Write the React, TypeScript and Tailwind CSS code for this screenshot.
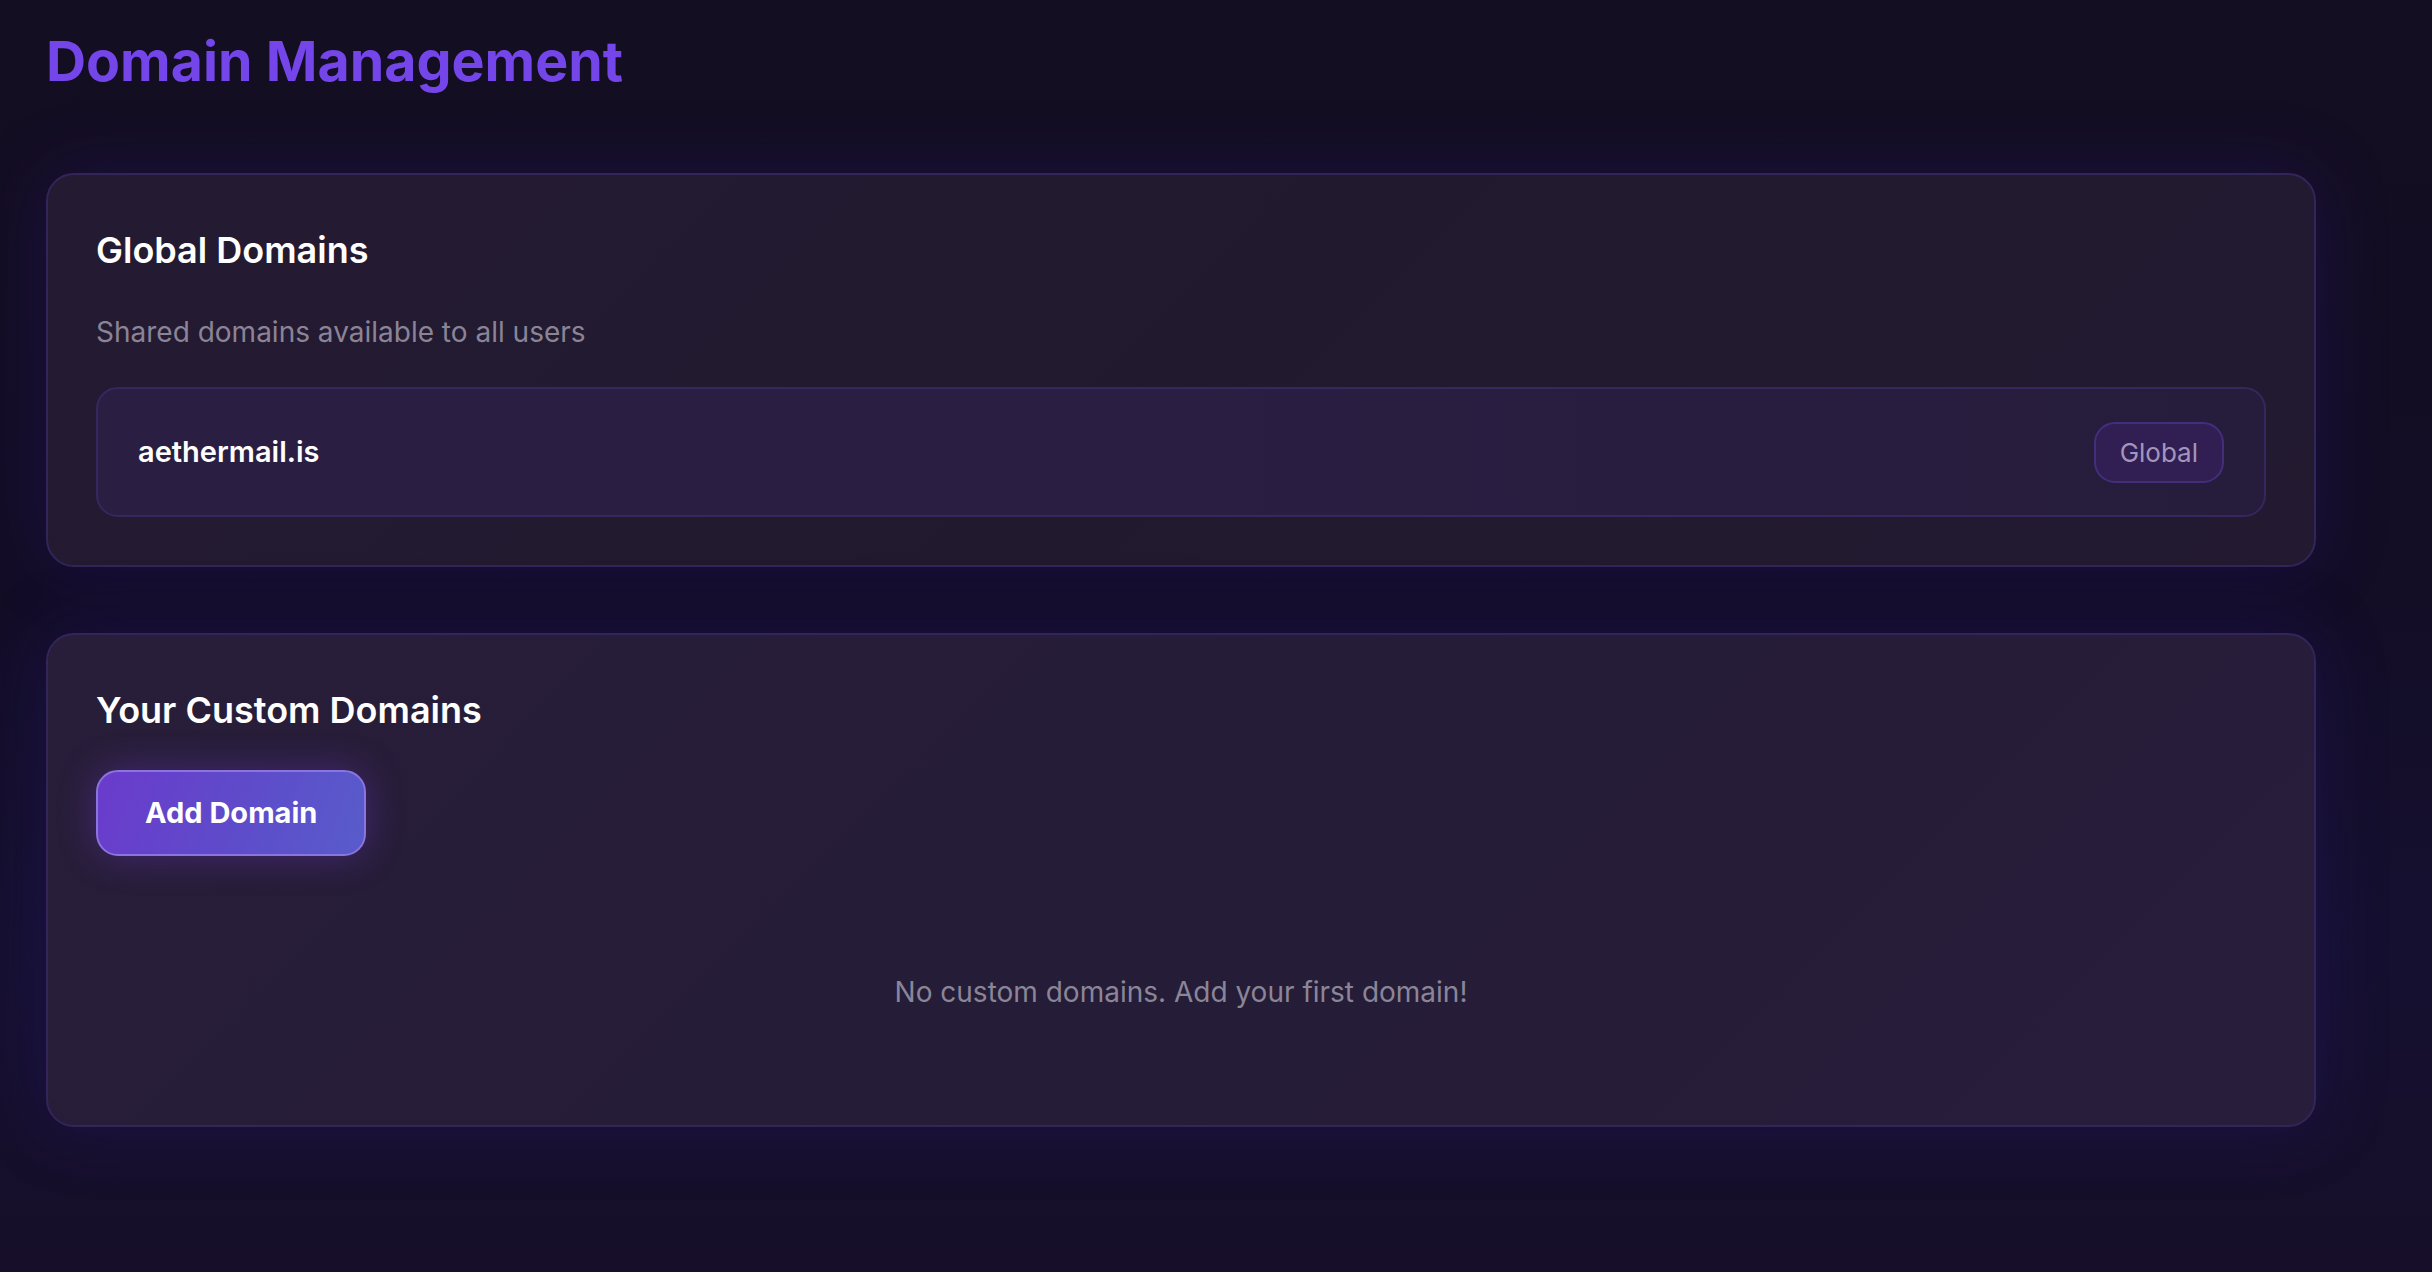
import React from "react";

export default function App() {
  return (
    <div
      className="min-h-screen w-full bg-[linear-gradient(180deg,#130e21_0%,#130d26_45%,#151030_75%,#170f29_100%)] pl-[46px] pt-[27px] pb-[80px] text-white"
      style={{ fontFamily: "Inter, 'Noto Sans', sans-serif" }}
    >
      <h1 className="text-[55.5px] font-bold leading-[67px] text-[#7445e8] mb-[79px]">
        Domain Management
      </h1>

      <div className="w-[2270px] flex flex-col gap-[66px]">
        {/* Global Domains */}
        <section className="rounded-[28px] border-2 border-[#33255a] bg-[linear-gradient(135deg,#241b33_0%,#211a2e_50%,#231a31_100%)] px-[48px] pt-[49px] pb-[48px] shadow-[0_0_70px_rgba(45,25,130,0.3)]">
          <h2 className="text-[36px] font-semibold leading-[53px] text-white mb-[34px]">
            Global Domains
          </h2>
          <p className="text-[28px] leading-[42px] text-[#8b8497] mb-[34px]">
            Shared domains available to all users
          </p>
          <div className="flex h-[130px] items-center justify-between rounded-[22px] border-2 border-[#37275f] bg-[linear-gradient(90deg,#2a1f42_0%,#2a1e42_50%,#261c3b_100%)] px-[40px]">
            <span className="text-[29px] font-semibold leading-[42px] text-white">
              aethermail.is
            </span>
            <span className="rounded-[21px] border-2 border-[#432e7c] bg-[#311f53] px-[24px] py-[9px] text-[26px] leading-[39px] text-[#a395bd]">
              Global
            </span>
          </div>
        </section>

        {/* Custom Domains */}
        <section className="rounded-[28px] border-2 border-[#33255a] bg-[linear-gradient(135deg,#281e39_0%,#251c37_50%,#281d3a_100%)] px-[48px] pt-[49px] pb-[48px] shadow-[0_0_70px_rgba(45,25,130,0.3)]">
          <h2 className="text-[36px] font-semibold leading-[53px] text-white mb-[33px]">
            Your Custom Domains
          </h2>
          <button className="rounded-[22px] border-2 border-[#8b74de] bg-[linear-gradient(110deg,#6a3bcc_0%,#5e4cca_55%,#585ccb_100%)] px-[47px] py-[20px] text-[29px] font-bold leading-[42px] text-white shadow-[0_0_36px_rgba(120,60,230,0.35)]">
            Add Domain
          </button>
          <div className="pt-[115px] pb-[64px] text-center">
            <p className="text-[28px] leading-[42px] text-[#8b8598]">
              No custom domains. Add your first domain!
            </p>
          </div>
        </section>
      </div>
    </div>
  );
}
